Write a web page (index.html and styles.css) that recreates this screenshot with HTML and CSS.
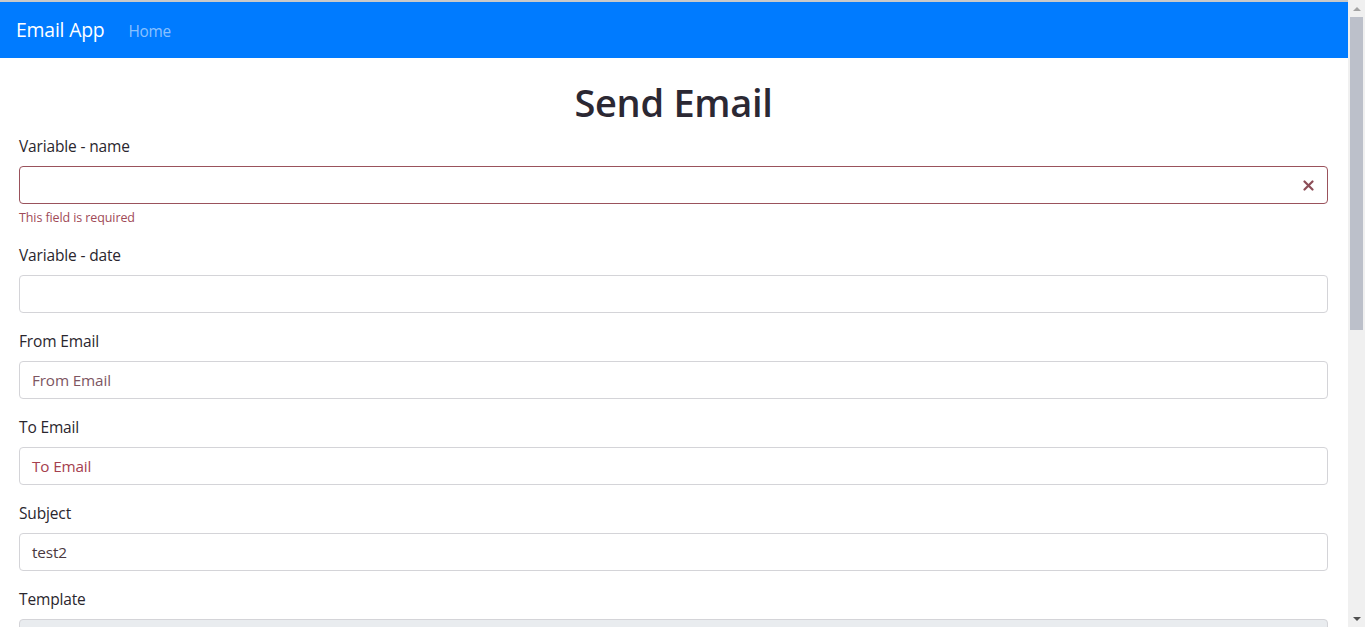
FILE: index.html
```html
<!DOCTYPE html>
<html lang="en">
<head>
<meta charset="utf-8">
<title>Email App</title>
<link rel="stylesheet" href="styles.css">
</head>
<body>
<div class="window">
  <div class="page">
    <nav class="navbar">
      <span class="brand">Email App</span>
      <a class="nav-link">Home</a>
    </nav>
    <main class="content">
      <h1 class="title">Send Email</h1>
      <div class="form-group">
        <label class="label">Variable - name</label>
        <div class="input invalid">
          <svg class="clear" width="11" height="11" viewBox="0 0 11 11"><path d="M1.5 1.5 L9.5 9.5 M9.5 1.5 L1.5 9.5" stroke="#8c4d57" stroke-width="2.2" stroke-linecap="round"/></svg>
        </div>
        <div class="feedback">This field is required</div>
      </div>
      <div class="form-group">
        <label class="label">Variable - date</label>
        <div class="input"></div>
      </div>
      <div class="form-group">
        <label class="label">From Email</label>
        <div class="input"><span class="ph ph-from">From Email</span></div>
      </div>
      <div class="form-group">
        <label class="label">To Email</label>
        <div class="input"><span class="ph ph-to">To Email</span></div>
      </div>
      <div class="form-group">
        <label class="label">Subject</label>
        <div class="input"><span class="value">test2</span></div>
      </div>
      <div class="form-group">
        <label class="label">Template</label>
        <div class="input textarea"></div>
      </div>
    </main>
  </div>
  <div class="scrollbar">
    <div class="arrow arrow-up"></div>
    <div class="track"><div class="thumb"></div></div>
    <div class="arrow arrow-down"></div>
  </div>
</div>
</body>
</html>
```
FILE: styles.css
```css
* { box-sizing: border-box; }
html, body { margin: 0; padding: 0; height: 100%; overflow: hidden; }
body {
  font-family: "Open Sans", "Noto Sans", sans-serif;
  font-size: 16px;
  line-height: 1.5;
  color: #2a262e;
  background: #fff;
}
.window { display: flex; height: 627px; }
.page { flex: 1; min-width: 0; border-top: 2px solid #c9c9c9; overflow: hidden; }
.navbar {
  height: 56px;
  background: #007bff;
  display: flex;
  align-items: center;
  padding: 0 16px;
}
.brand { color: #fff; font-size: 19.4px; margin-right: 24px; letter-spacing: -0.2px; }
.nav-link { color: rgba(255,255,255,0.55); font-size: 15.4px; letter-spacing: -0.3px; padding-top: 3px; }
.content { padding: 0 20px 0 19px; }
.title {
  margin: 20px 0 8px;
  font-size: 38px;
  line-height: 48px;
  font-weight: 600;
  text-align: center;
  color: #2b2833;
  letter-spacing: -0.3px;
}
.form-group { margin-bottom: 16px; }
.label { display: block; margin-bottom: 8px; font-size: 15.5px; line-height: 24px; letter-spacing: -0.15px; }
.input {
  height: 38px;
  border: 1px solid #d4d4d8;
  border-radius: 4px;
  display: flex;
  align-items: center;
  padding: 0 12px;
  font-size: 15.3px;
  letter-spacing: -0.15px;
}
.input.invalid { border-color: #9a525c; justify-content: flex-end; padding-right: 13px; }
.feedback { margin-top: 4px; font-size: 12.5px; line-height: 19px; color: #a04a57; letter-spacing: -0.1px; }
.ph-from { color: #7d5662; }
.ph-to { color: #a5404e; }
.value { color: #4a3840; }
.textarea { background: #e9ecef; height: 80px; }
.scrollbar {
  width: 17px;
  background: #f0f0f0;
  display: flex;
  flex-direction: column;
}
.arrow { height: 17px; display: flex; align-items: center; justify-content: center; }
.arrow-up::before {
  content: "";
  border-left: 4px solid transparent;
  border-right: 4px solid transparent;
  border-bottom: 4px solid #a3a3a3;
}
.arrow-down::before {
  content: "";
  border-left: 4px solid transparent;
  border-right: 4px solid transparent;
  border-top: 4px solid #505050;
}
.track { flex: 1; padding: 0 2px; }
.thumb { height: 313px; background: #bcc0ca; }
```
